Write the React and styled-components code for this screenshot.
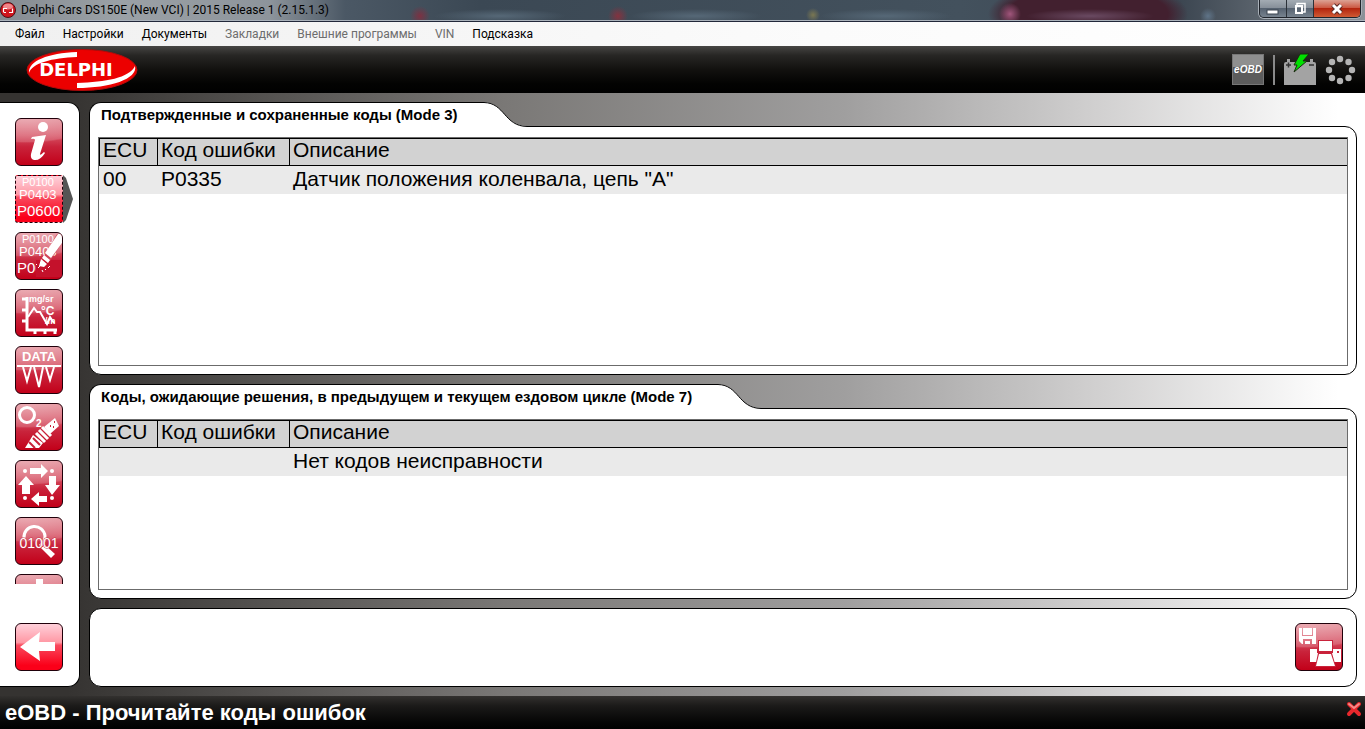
import React from 'react';
import styled, { createGlobalStyle, css } from 'styled-components';

const sans = '"Liberation Sans", Arial, sans-serif';
const ui = 'Roboto, "Segoe UI", sans-serif';

const GlobalStyle = createGlobalStyle`
  *, *::before, *::after { box-sizing: border-box; }
  body { margin: 0; font-family: ${sans}; color: #000; }
  button { font: inherit; color: inherit; margin: 0; padding: 0; border: 0; background: none; }
`;

const Window = styled.div`
  display: flex;
  flex-direction: column;
  height: 100vh;
  overflow: hidden;
`;

const TitleBar = styled.header`
  display: flex;
  align-items: flex-start;
  height: 22px;
  border-bottom: 1px solid #22283a;
  background:
    radial-gradient(circle 11px at 1010px 14px, #a0567c, transparent),
    radial-gradient(ellipse 64px 7px at 1090px 16px, #6a4a62, transparent),
    radial-gradient(ellipse 100px 34px at 1088px 14px, #42202f 80%, transparent 100%),
    radial-gradient(circle 10px at 420px 16px, #7c3142, transparent),
    radial-gradient(circle 10px at 618px 16px, #84323f, transparent),
    radial-gradient(circle 7px at 813px 15px, #7a7752, transparent),
    radial-gradient(ellipse 66px 7px at 500px 16px, #566877, transparent),
    radial-gradient(ellipse 66px 7px at 696px 16px, #566877, transparent),
    radial-gradient(ellipse 66px 7px at 886px 16px, #566877, transparent),
    radial-gradient(circle 8px at 1208px 16px, #5f7488, transparent),
    linear-gradient(90deg, #858b91 0, #9ba1a6 120px, #8d949b 270px, #4b5865 345px, #3b4854 480px, #43515d 960px, #3c4651 1180px, #6a727a 1300px, #8b9299 100%);
  box-shadow: inset 0 -1px #aab2bb;
`;

const AppTitle = styled.h1`
  display: flex;
  align-items: center;
  gap: 5px;
  flex: 1;
  height: 20px;
  margin: 0;
  font: 400 12px/20px ${ui};
  white-space: nowrap;
`;

const WindowButtons = styled.div`
  display: flex;
  height: 18px;
  margin-right: 4px;
  border: 1px solid #1f242b;
  border-top: 0;
  border-radius: 0 0 5px 5px;
  overflow: hidden;
  box-shadow: 0 0 0 1px #a9b0b8;
`;

const WindowButton = styled.button`
  display: grid;
  place-items: center;
  width: ${(p) => (p.$close ? 46 : 27)}px;
  border-right: 1px solid #2b3138;
  background: ${(p) =>
    p.$close
      ? 'linear-gradient(#dca294 0, #cc5a44 45%, #b3250e 50%, #cf5a33 100%)'
      : 'linear-gradient(#a3abb3 0, #87909a 45%, #566270 50%, #77838f 100%)'};
  &:last-child { border-right: 0; }
`;

const MenuBar = styled.nav`
  display: flex;
  align-items: center;
  gap: 18px;
  height: 24px;
  padding-left: 15px;
  background: linear-gradient(90deg, #f0f0f0, #fbfbfb 60%, #fff);
`;

const MenuItem = styled.button`
  font: 400 12px/24px ${ui};
  white-space: nowrap;
  color: #000;
  &:disabled { color: #6d6d6d; }
`;

const BrandBar = styled.div`
  display: flex;
  align-items: center;
  justify-content: space-between;
  height: 47px;
  padding: 0 9px 0 26px;
  background: linear-gradient(#474644 0, #272624 20%, #12110f 50%, #030302 80%, #000 100%);
`;

const StatusIcons = styled.div`
  display: flex;
  align-items: center;
  gap: 9px;
`;

const Divider = styled.span`
  width: 2px;
  height: 30px;
  background: #8a8a8a;
`;

const ProtocolBadge = styled.span`
  width: 32px;
  height: 31px;
  border: 1px solid #777;
  background: linear-gradient(176deg, #8f8f8f 38%, #5c5c5c 40%);
  color: #fff;
  font: italic 700 10px/30px ${sans};
  text-align: center;
`;

const Workspace = styled.main`
  display: flex;
  flex: 1;
  gap: 9px;
  min-height: 0;
  padding: 9px 8px 9px 0;
  background: linear-gradient(90deg, #353331 5%, #7a7876 37%, #a09f9f 62%, #d0cfcf 80%, #fff 98%);
`;

const Sidebar = styled.nav`
  display: flex;
  flex-direction: column;
  gap: 39px;
  width: 80px;
  padding: 15px 0 15px 15px;
  border: 1px solid #000;
  border-left: 0;
  border-radius: 0 12px 12px 0;
  background: #fff;
`;

const ToolList = styled.div`
  display: flex;
  flex-direction: column;
  gap: 9px;
  flex: 1;
  min-height: 0;
  overflow: hidden;
`;

const ToolRow = styled.div`
  display: flex;
  flex: none;
`;

const bright = css`
  border-style: ${(p) => (p.$selected ? 'dashed' : 'solid')};
  border-radius: ${(p) => (p.$selected ? '3px' : '6px')};
  background: linear-gradient(#ffd0da 0, #ff98a4 40%, #f94a5e 46%, #fb0019 90%);
`;

const ToolButton = styled.button`
  display: block;
  flex: none;
  width: 48px;
  height: 48px;
  overflow: hidden;
  border: 1px solid #20000a;
  border-radius: 6px;
  background: radial-gradient(ellipse 70px 24px at 10px 0, #ffffff55 0, #ffffff2a 94%, transparent 100%),
    linear-gradient(#e0808c 0, #d65264 35%, #c9233b 60%, #c20019 100%);
  ${(p) => p.$bright && bright}
`;

const Icon = styled.svg`
  display: block;
  fill: #fff;
  text { fill: #fff; font-family: ${sans}; }
`;

const Panels = styled.div`
  display: grid;
  flex: 1;
  grid-template-rows: minmax(0, 273fr) minmax(0, 215fr) auto;
  gap: 9px;
  min-width: 0;
`;

const Panel = styled.section`
  display: flex;
  flex-direction: column;
  min-height: 0;
`;

const TabRow = styled.div`
  position: relative;
  display: flex;
  height: 25px;
  margin-bottom: -1px;
`;

const Tab = styled.h2`
  margin: 0;
  padding: 0 24px 0 11px;
  border: 1px solid #000;
  border-width: 1px 0 0 1px;
  border-radius: 12px 0 0 0;
  background: #fff;
  font: 700 15px/24px ${sans};
  white-space: nowrap;
`;

const PanelBody = styled.div`
  flex: 1;
  min-height: 0;
  padding: 10px 8px 8px;
  border: 1px solid #000;
  border-radius: 0 12px 12px 12px;
  background: #fff;
`;

const TableFrame = styled.div`
  height: 100%;
  overflow: hidden;
  border: 1px solid #6b6b6b;
`;

const CodeTable = styled.table`
  width: 100%;
  table-layout: fixed;
  border-spacing: 0;
  font-size: 21px;
  line-height: 24px;
  text-align: left;
`;

const Col = styled.col`
  width: ${(p) => p.$width};
`;

const HeadCell = styled.th`
  height: 28px;
  padding: 0 3px 2px;
  border: 1px solid #000;
  border-left-width: ${(p) => (p.$first ? 1 : 0)}px;
  background: #d2d2d2;
  font-weight: 400;
  line-height: 22px;
  vertical-align: top;
  white-space: nowrap;
  &:last-child { border-right: 0; }
`;

const Cell = styled.td`
  height: 28px;
  padding: 0 3px 2px;
  border-left: ${(p) => (p.$first ? 1 : 0)}px solid transparent;
  background: #eaeaea;
  white-space: nowrap;
`;

const ActionPanel = styled.section`
  display: flex;
  justify-content: flex-end;
  padding: 14px 13px 15px;
  border: 1px solid #000;
  border-radius: 12px;
  background: #fff;
`;

const StatusBar = styled.footer`
  display: flex;
  justify-content: space-between;
  height: 33px;
  padding: 0 3px 0 5px;
  background: linear-gradient(#33312f 0, #1b1a19 30%, #050505 80%, #000);
  color: #fff;
`;

const StatusText = styled.p`
  margin: 0;
  font: 700 22px/33px ${sans};
  white-space: nowrap;
`;

const StatusClose = styled.button`
  width: 16px;
  height: 29px;
`;

const AppIcon = () => (
  <svg width="16" height="16" viewBox="0 0 16 16" aria-hidden="true">
    <circle cx="8" cy="8" r="7.5" fill="#d0141c" stroke="#4d1116" />
    <ellipse cx="8" cy="4.5" rx="5" ry="3" fill="#f0868a" />
    <path d="M3.5 10V6.5H7M12.500 6.500V10.500H9M3.500 10.500H6" fill="none" stroke="#fff" strokeWidth="1.200" />
  </svg>
);

const Logo = () => (
  <svg width="112" height="42" viewBox="0 0 112 42" role="img" aria-label="Delphi">
    <ellipse cx="56" cy="21" rx="55" ry="20.500" fill="#ec0000" stroke="#b00b0b" />
    <path d="M51 3C22 4 2 12 3 24C6 14 26 9 51 8Z" fill="#fff" />
    <path d="M51 39C84 39 112 30 109 17C103 29 80 33 51 34Z" fill="#fff" />
    <text x="50" y="27" textAnchor="middle" fill="#fff" fontFamily='"DejaVu Sans", sans-serif' fontWeight="700" fontSize="18">
      DELPHI
    </text>
  </svg>
);

const BatteryIcon = () => (
  <svg width="32" height="34" viewBox="0 0 32 34" role="img" aria-label="Battery">
    <path d="M0 11q0-2 2-2h1V6h3v3h20V6h3v3h1q2 0 2 2v21H0Z" fill="#a3a3a3" />
    <path d="M2 12h5M4.500 9.500v5M25 12h5" stroke="#333" strokeWidth="1.500" />
    <path d="M16 1H25L19 8H23L10 19L13 12H10Z" fill="#00e000" stroke="#1c2a10" />
  </svg>
);

const spinnerDots = [[15, 4], [23.500, 7], [27, 15], [23.500, 23], [15, 26], [7, 23], [4, 15], [7, 7]];

const SpinnerIcon = () => (
  <svg width="31" height="30" viewBox="0 0 31 30" role="img" aria-label="Activity">
    {spinnerDots.map(([x, y]) => (
      <circle key={`${x}-${y}`} cx={x} cy={y} r="3.200" fill="#b4b4b4" />
    ))}
  </svg>
);

const CodesText = () => (
  <>
    <text x="6" y="10" fontSize="11">P0100</text>
    <text x="3" y="23" fontSize="13">P0403</text>
    <text x="1" y="40" fontSize="15">P0600</text>
  </>
);

const drawings = {
  info: (
    <>
      <circle cx="27" cy="8" r="5" />
      <path d="M16 18l14-2-6 19q0 2 4-2l1 1q-5 8-11 7-4-1-3-6l4-14q0-2-4-1Z" />
    </>
  ),
  read: <CodesText />,
  erase: (
    <>
      <CodesText />
      <path d="M20 27H46V44H20Z" fill="#c4112b" />
      <path d="M27 25L41 1H46V10L34 28Z" fill="#d04558" />
      <path d="M46 1V10L35 25L29 20L42 1Z" />
      <path d="M28 22l6 5-2 3-6-5Zm-3 4l6 5-3 3-5-1Z" />
      <path d="M22 35l2-2M32 35l2-2M26 37l1 2M20 31l1 1M29 36l1 1" stroke="#fff" strokeWidth="1" />
    </>
  ),
  live: (
    <>
      <path d="M11 7V40H41M6 9H11M6 20H11M6 31H11M19 40v4M29 40v4M39 40v4" fill="none" stroke="#fff" strokeWidth="3" />
      <path d="M12 27L18 18L21 22L24 22L31 34L34 27L38 33" fill="none" stroke="#fff" strokeWidth="2" />
      <text x="13" y="12" fontSize="9" fontWeight="700">mg/sr</text>
      <text x="25" y="25" fontSize="12" fontWeight="700">°C</text>
      <text x="29" y="34" fontSize="9" fontWeight="700">/m</text>
    </>
  ),
  data: (
    <>
      <text x="23" y="14" fontSize="13" fontWeight="700" textAnchor="middle">DATA</text>
      <path d="M1 19H45M7 20L11 34L15 20M18 20L23 40L27 20M30 20L34 33L38 20" fill="none" stroke="#fff" strokeWidth="2" />
    </>
  ),
  lambda: (
    <>
      <circle cx="11" cy="11" r="7.500" fill="none" stroke="#fff" strokeWidth="3" />
      <text x="20" y="23" fontSize="10" fontWeight="700">2</text>
      <path d="M39 14L43 22L34 30L28 23Z" />
      <path d="M26 23L35 32M23 26L32 35M20 29L29 38" stroke="#fff" strokeWidth="3" />
      <path d="M17 31L27 39L23 44H9L14 36Z" />
      <path d="M34 22h1M38 18h1M37 23h1M17 34l7 7M13 38l6 6" stroke="#c9233b" strokeWidth="2" />
    </>
  ),
  cycle: (
    <>
      <path d="M14 7H25V3L32 10L25 17V13H14Z" />
      <path d="M33 15H40V24H44L36 34L29 24H33Z" />
      <path d="M31 41H23V45L15 38L23 31V35H31Z" />
      <path d="M14 33H6V24H2L10 15L18 24H14Z" />
      <circle cx="9" cy="10" r="2" />
      <circle cx="36" cy="10" r="2" />
      <circle cx="9" cy="37" r="2" />
      <circle cx="36" cy="37" r="2" />
    </>
  ),
  search: (
    <>
      <path d="M8 20A10.500 10.500 0 0 1 29 18Q29 24 24 28" fill="none" stroke="#fff" strokeWidth="3" />
      <path d="M25 30L29 27L39 36L35 40Z" />
      <text x="23" y="30" fontSize="14" textAnchor="middle" paintOrder="stroke" stroke="#c9364a">01001</text>
    </>
  ),
  add: <path d="M20 4H27V17H40V24H27V40H20V24H7V17H20Z" />,
  back: <path d="M4 23L24 8L23 18H39V27H23L24 37Z" />,
  report: (
    <>
      <path d="M3 4H20V20H6L3 17ZM6 4V12H17V4ZM7 15V20H16V15Z" fillRule="evenodd" />
      <path d="M7 4h9v7H7ZM9 17h5v3H9Z" />
      <path d="M14 25H21V29H37V25H45V38H14Z" />
      <path d="M22 16H37V28H22ZM22 29H36L40 43H19Z" fill="#c9233b" />
      <path d="M23 17H36V27H23ZM23 30H35L39 42H20Z" />
      <path d="M41 28h2" stroke="#c9233b" strokeWidth="2" />
    </>
  ),
};

const Tool = ({ icon, label, selected }) => (
  <ToolRow>
    <ToolButton type="button" aria-label={label} $bright={selected || icon === 'back'} $selected={selected}>
      <Icon width="46" height="46" viewBox="0 0 46 46" aria-hidden="true">{drawings[icon]}</Icon>
    </ToolButton>
    {selected && (
      <svg width="10" height="48" viewBox="0 0 10 48" aria-hidden="true">
        <path d="M0 0L3 3L10 24L3 45L0 48Z" fill="#555" />
      </svg>
    )}
  </ToolRow>
);

const tools = [
  { icon: 'info', label: 'Информация' },
  { icon: 'read', label: 'Прочитать коды', selected: true },
  { icon: 'erase', label: 'Стереть коды' },
  { icon: 'live', label: 'Параметры' },
  { icon: 'data', label: 'Данные' },
  { icon: 'lambda', label: 'Датчик кислорода' },
  { icon: 'cycle', label: 'Циклы' },
  { icon: 'search', label: 'Поиск' },
  { icon: 'add', label: 'Добавить' },
];

const menus = [
  { label: 'Файл' },
  { label: 'Настройки' },
  { label: 'Документы' },
  { label: 'Закладки', disabled: true },
  { label: 'Внешние программы', disabled: true },
  { label: 'VIN', disabled: true },
  { label: 'Подсказка' },
];

const CodesPanel = ({ title, row }) => (
  <Panel>
    <TabRow>
      <Tab>{title}</Tab>
      <svg width="45" height="25" viewBox="0 0 45 25" aria-hidden="true">
        <path d="M0 0H2C23 1 22 24 45 24V25H0Z" fill="#fff" />
        <path d="M0 .5H2C23 1 22 24 45 24.500" fill="none" stroke="#000" />
      </svg>
    </TabRow>
    <PanelBody>
      <TableFrame>
        <CodeTable>
          <colgroup>
            <Col $width="59px" />
            <Col $width="132px" />
            <Col $width="auto" />
          </colgroup>
          <thead>
            <tr>
              <HeadCell $first>ECU</HeadCell>
              <HeadCell>Код ошибки</HeadCell>
              <HeadCell>Описание</HeadCell>
            </tr>
          </thead>
          <tbody>
            <tr>
              <Cell $first>{row[0]}</Cell>
              <Cell>{row[1]}</Cell>
              <Cell>{row[2]}</Cell>
            </tr>
          </tbody>
        </CodeTable>
      </TableFrame>
    </PanelBody>
  </Panel>
);

export default function App() {
  return (
    <Window>
      <GlobalStyle />
      <TitleBar>
        <AppTitle>
          <AppIcon />
          Delphi Cars DS150E (New VCI) | 2015 Release 1 (2.15.1.3)
        </AppTitle>
        <WindowButtons>
          <WindowButton type="button" aria-label="Свернуть">
            <svg width="14" height="14" viewBox="0 0 14 14">
              <rect x="1" y="8" width="11" height="4" fill="#fff" stroke="#3b4450" />
            </svg>
          </WindowButton>
          <WindowButton type="button" aria-label="Восстановить">
            <svg width="14" height="14" viewBox="0 0 14 14">
              <path d="M4 4V1.500H12V10H10" fill="none" stroke="#fff" strokeWidth="1.500" />
              <rect x="3" y="4" width="6" height="7" fill="none" stroke="#fff" strokeWidth="2" />
            </svg>
          </WindowButton>
          <WindowButton type="button" aria-label="Закрыть" $close>
            <svg width="14" height="14" viewBox="0 0 14 14">
              <path d="M3 3L11 11M11 3L3 11" stroke="#5b2a24" strokeWidth="5" />
              <path d="M3 3L11 11M11 3L3 11" stroke="#fff" strokeWidth="3" />
            </svg>
          </WindowButton>
        </WindowButtons>
      </TitleBar>
      <MenuBar>
        {menus.map((m) => (
          <MenuItem key={m.label} type="button" disabled={m.disabled}>{m.label}</MenuItem>
        ))}
      </MenuBar>
      <BrandBar>
        <Logo />
        <StatusIcons>
          <ProtocolBadge>eOBD</ProtocolBadge>
          <Divider />
          <BatteryIcon />
          <SpinnerIcon />
        </StatusIcons>
      </BrandBar>
      <Workspace>
        <Sidebar>
          <ToolList>
            {tools.map((t) => <Tool key={t.icon} {...t} />)}
          </ToolList>
          <Tool icon="back" label="Назад" />
        </Sidebar>
        <Panels>
          <CodesPanel
            title="Подтвержденные и сохраненные коды (Mode 3)"
            row={['00', 'P0335', 'Датчик положения коленвала, цепь "А"']}
          />
          <CodesPanel
            title="Коды, ожидающие решения, в предыдущем и текущем ездовом цикле (Mode 7)"
            row={['', '', 'Нет кодов неисправности']}
          />
          <ActionPanel>
            <Tool icon="report" label="Сохранить и печать" />
          </ActionPanel>
        </Panels>
      </Workspace>
      <StatusBar>
        <StatusText>eOBD - Прочитайте коды ошибок</StatusText>
        <StatusClose type="button" aria-label="Закрыть сообщение">
          <svg width="16" height="16" viewBox="0 0 16 16">
            <path d="M3 3L13 13M13 3L3 13" stroke="#e8282c" strokeWidth="4" strokeLinecap="round" />
            <path d="M3 3L8 7L13 3" fill="none" stroke="#f58a88" strokeWidth="2" strokeLinecap="round" />
          </svg>
        </StatusClose>
      </StatusBar>
    </Window>
  );
}
